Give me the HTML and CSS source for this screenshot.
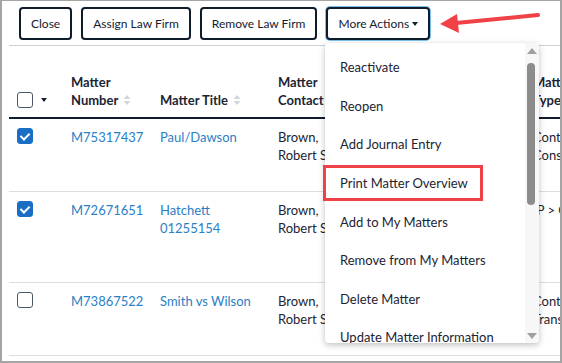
FILE: index.html
```html
<!doctype html>
<html lang="en">
<head>
    <meta charset="UTF-8">
    <title>Matters</title>
    <link rel="stylesheet" href="styles.css">
</head>
<body>
<div class="frame">
    <div class="toolbar">
        <button class="btn">Close</button>
        <button class="btn">Assign Law Firm</button>
        <button class="btn">Remove Law Firm</button>
        <button class="btn btn-focus">More Actions <span class="caret"></span></button>
    </div>

    <div class="grid">
        <div class="row head">
            <div class="cell check-cell">
                <span class="checkbox"></span>
                <span class="caret small"></span>
            </div>
            <div class="cell">Matter<br>Number <svg class="sort" viewBox="0 0 8 12"><path d="M4 1 L7.5 5 H0.5 Z M4 11 L7.5 7 H0.5 Z"/></svg></div>
            <div class="cell">Matter Title <svg class="sort" viewBox="0 0 8 12"><path d="M4 1 L7.5 5 H0.5 Z M4 11 L7.5 7 H0.5 Z"/></svg></div>
            <div class="cell">Matter<br>Contact</div>
            <div class="cell">Matter<br>Type</div>
        </div>

        <div class="row">
            <div class="cell check-cell"><span class="checkbox checked"></span></div>
            <div class="cell"><a href="#">M75317437</a></div>
            <div class="cell"><a href="#">Paul/Dawson</a></div>
            <div class="cell">Brown,<br>Robert Smith</div>
            <div class="cell">Contract<br>Consumer</div>
        </div>

        <div class="row tall">
            <div class="cell check-cell"><span class="checkbox checked"></span></div>
            <div class="cell"><a href="#">M72671651</a></div>
            <div class="cell"><a href="#">Hatchett<br>01255154</a></div>
            <div class="cell">Brown,<br>Robert Smith</div>
            <div class="cell">IP &gt; Copyright</div>
        </div>

        <div class="row">
            <div class="cell check-cell"><span class="checkbox"></span></div>
            <div class="cell"><a href="#">M73867522</a></div>
            <div class="cell"><a href="#">Smith vs Wilson</a></div>
            <div class="cell">Brown,<br>Robert Smith</div>
            <div class="cell">Contract<br>Transaction</div>
        </div>
    </div>

    <div class="menu">
        <ul>
            <li>Reactivate</li>
            <li>Reopen</li>
            <li>Add Journal Entry</li>
            <li>Print Matter Overview</li>
            <li>Add to My Matters</li>
            <li>Remove from My Matters</li>
            <li>Delete Matter</li>
            <li>Update Matter Information</li>
        </ul>
        <div class="scroll">
            <span class="arrow up"></span>
            <span class="thumb"></span>
            <span class="arrow down"></span>
        </div>
    </div>

    <!-- annotation overlays -->
    <div class="highlight"></div>
    <svg class="pointer" viewBox="0 0 110 24" width="110" height="24">
        <line x1="18" y1="12" x2="100" y2="4" stroke="#ef4146" stroke-width="4" stroke-linecap="round"/>
        <path d="M2 13 L19 3 L21 22 Z" fill="#ef4146"/>
    </svg>
</div>
</body>
</html>
```

FILE: styles.css
```css
body {
    margin: 0;
    background: #ffffff;
    font-family: Lato, "Open Sans", sans-serif;
    font-size: 13px;
    color: #1c2433;
}

.frame {
    position: relative;
    width: 562px;
    height: 363px;
    box-sizing: border-box;
    border: 2px solid #a4a4a4;
    border-top-width: 1px;
    overflow: hidden;
    padding-left: 7px;
}

/* Toolbar */
.toolbar {
    display: flex;
    gap: 9px;
    padding: 6px 0 5px 10px;
    border-bottom: 1px solid #cfcfcf;
}

.btn {
    font-family: inherit;
    font-size: 12px;
    color: #14202e;
    background: #ffffff;
    border: 2px solid #0f1c2c;
    border-radius: 4px;
    height: 33px;
    padding: 0 10px;
    display: flex;
    align-items: center;
    gap: 3px;
}

.btn-focus {
    box-shadow: 0 0 0 1px #7cc0ee;
}

.caret {
    display: inline-block;
    width: 0;
    height: 0;
    border-left: 3.5px solid transparent;
    border-right: 3.5px solid transparent;
    border-top: 4px solid #14202e;
}

/* Table */
.row {
    display: grid;
    grid-template-columns: 62px 89px 118px 255px 1fr;
    border-bottom: 1px solid #dedede;
    height: 73px;
    box-sizing: border-box;
    line-height: 18px;
}

.row.tall {
    height: 91px;
}

.row.head {
    height: 73px;
    align-items: end;
    padding-bottom: 8px;
    border-bottom: 2px solid #0f1c2c;
    font-weight: bold;
}

.cell {
    padding-top: 9px;
    white-space: nowrap;
}

.head .cell {
    padding-top: 0;
}

.check-cell {
    padding-left: 8px;
    display: flex;
    align-items: flex-start;
    gap: 8px;
}

.head .check-cell {
    align-items: center;
    height: 18px;
}

.checkbox {
    display: inline-block;
    width: 16px;
    height: 16px;
    box-sizing: border-box;
    border: 1.5px solid #4b5866;
    border-radius: 3px;
    position: relative;
}

.checkbox.checked {
    background: #1a6fc4;
    border-color: #1a6fc4;
}

.checkbox.checked::after {
    content: "";
    position: absolute;
    left: 4px;
    top: 2px;
    width: 4px;
    height: 7px;
    border: solid #ffffff;
    border-width: 0 2px 2px 0;
    transform: rotate(45deg);
}

.sort {
    width: 8px;
    height: 12px;
    fill: #d2d5d9;
    vertical-align: -1px;
    margin-left: 2px;
}

a {
    color: #2a80c6;
    text-decoration: none;
}

/* Dropdown */
.menu {
    position: absolute;
    left: 323px;
    top: 42px;
    width: 214px;
    height: 300px;
    background: #ffffff;
    border-radius: 4px;
    box-shadow: 0 2px 6px rgba(0, 0, 0, 0.25);
    overflow: hidden;
}

.menu ul {
    list-style: none;
    margin: 0;
    padding: 5px 0 0;
}

.menu li {
    height: 38.6px;
    display: flex;
    align-items: center;
    padding-left: 15px;
    white-space: nowrap;
}

.scroll {
    position: absolute;
    right: 0;
    top: 0;
    bottom: 0;
    width: 14px;
    background: #f7f7f7;
}

.thumb {
    position: absolute;
    left: 2px;
    top: 20px;
    width: 8px;
    height: 142px;
    border-radius: 4px;
    background: #8c8c8c;
}

.arrow {
    position: absolute;
    left: 2px;
    width: 0;
    height: 0;
    border-left: 5px solid transparent;
    border-right: 5px solid transparent;
}

.arrow.up {
    top: 5px;
    border-bottom: 6px solid #a0a0a0;
}

.arrow.down {
    bottom: 4px;
    border-top: 6px solid #a0a0a0;
}

/* Annotation */
.highlight {
    position: absolute;
    left: 321px;
    top: 164px;
    width: 160px;
    height: 36px;
    box-sizing: border-box;
    border: 3px solid #ef4146;
}

.pointer {
    position: absolute;
    left: 436px;
    top: 10px;
}
```
